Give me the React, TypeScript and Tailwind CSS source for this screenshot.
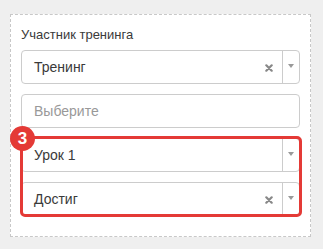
import React from 'react'

function Arrow() {
  return (
    <div className="flex h-full w-[17px] items-center justify-center border-l border-[#ccc] pb-[2px]">
      <svg width="6" height="4" viewBox="0 0 6 4">
        <path d="M0 0 L6 0 L3 4 Z" fill="#999" />
      </svg>
    </div>
  )
}

function Clear() {
  return (
    <svg width="8" height="8" viewBox="0 0 8 8" className="mr-[9px] mt-[1px]">
      <path d="M1.3 1.3 L6.7 6.7 M6.7 1.3 L1.3 6.7" stroke="#888" strokeWidth="2.2" strokeLinecap="round" />
    </svg>
  )
}

function Select({ value, clearable }: { value: string; clearable?: boolean }) {
  return (
    <div className="flex h-[34px] items-center rounded-[4px] border border-[#ccc] bg-white">
      <span className="flex-1 pl-[12px] text-[14px] text-[#3a3a3a]">{value}</span>
      {clearable && <Clear />}
      <Arrow />
    </div>
  )
}

export default function App() {
  return (
    <div className="h-[249px] w-[323px] bg-[#efefef] pt-[14px] pl-[10px]" style={{ fontFamily: '"Liberation Sans", Arial, sans-serif' }}>
      <div className="h-[223px] w-[301px] border border-dashed border-[#c8c8c8] bg-white px-[10px] pt-[12px]">
        <div className="text-[13px] leading-[16px] text-[#3a3a3a]">Участник тренинга</div>
        <div className="mt-[7px] flex flex-col gap-[10px]">
          <Select value="Тренинг" clearable />
          <div className="flex h-[34px] items-center rounded-[4px] border border-[#ccc] bg-white pl-[12px] text-[14px] text-[#999]">
            Выберите
          </div>
          <div className="relative flex flex-col gap-[10px]">
            <Select value="Урок 1" />
            <Select value="Достиг" clearable />
            <div className="pointer-events-none absolute -top-[2px] -left-[1px] -right-[2px] -bottom-[1px] rounded-[5px] border-[3px] border-[#e43a36]" />
            <div className="absolute -top-[12px] -left-[11px] flex h-[25px] w-[25px] items-center justify-center rounded-full bg-[#e43a36] text-[17px] font-bold text-white">
              3
            </div>
          </div>
        </div>
      </div>
    </div>
  )
}
